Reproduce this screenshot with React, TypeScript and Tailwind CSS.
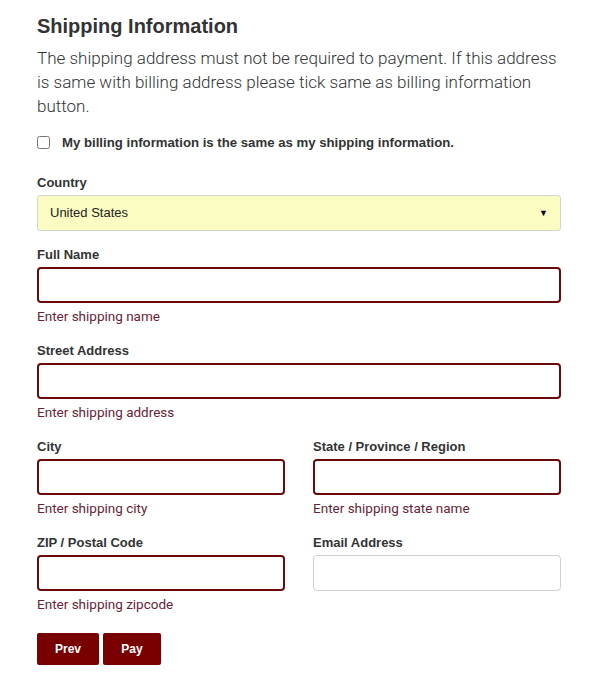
import React from 'react';

const label = "block text-[13px] font-semibold text-[#333] mb-[4px] font-['Liberation_Sans',Arial,sans-serif] leading-[16px]";
const errInput = "w-full h-[36px] rounded-[4px] border-2 border-[#6b0a0a] bg-white px-3 outline-none";
const okInput = "w-full h-[36px] rounded-[4px] border border-[#d0d0d0] bg-white px-3 outline-none";
const err = "mt-[5px] text-[13.5px] text-[#6a2336] leading-[16px] font-['Roboto',sans-serif]";

const Field: React.FC<{ name: string; error?: string }> = ({ name, error }) => (
  <div>
    <label className={label}>{name}</label>
    <input type="text" className={error ? errInput : okInput} />
    {error && <p className={err}>{error}</p>}
  </div>
);

const App: React.FC = () => {
  return (
    <div className="w-[598px] min-h-[690px] bg-white px-[37px] pt-[14px]">
      <h2 className="text-[20px] font-bold text-[#333] leading-[24px] font-['Liberation_Sans',Arial,sans-serif]">
        Shipping Information
      </h2>
      <p className="mt-[8px] text-[17px] leading-[24px] text-[#333] font-['Roboto',sans-serif] font-light">
        The shipping address must not be required to payment. If this address is same with billing address please tick same as billing information button.
      </p>

      <label className="mt-[15px] flex items-center gap-[12px]">
        <input type="checkbox" className="w-[13px] h-[13px] m-0" />
        <span className="text-[13.2px] font-bold text-[#333] font-['Liberation_Sans',Arial,sans-serif]">
          My billing information is the same as my shipping information.
        </span>
      </label>

      <div className="mt-[22px]">
        <label className={label}>Country</label>
        <div className="relative w-full h-[36px] rounded-[3px] border border-[#d4d4d4] bg-[#fbfcc1] flex items-center px-3">
          <span className="text-[13px] text-[#222] font-['Liberation_Sans',Arial,sans-serif]">United States</span>
          <span className="ml-auto text-[9px] text-black">▼</span>
        </div>
      </div>

      <div className="mt-[16px] flex flex-col gap-[19px]">
        <Field name="Full Name" error="Enter shipping name" />
        <Field name="Street Address" error="Enter shipping address" />
        <div className="grid grid-cols-2 gap-x-[28px] gap-y-[19px]">
          <Field name="City" error="Enter shipping city" />
          <Field name="State / Province / Region" error="Enter shipping state name" />
          <Field name="ZIP / Postal Code" error="Enter shipping zipcode" />
          <Field name="Email Address" />
        </div>
      </div>

      <div className="mt-[21px] flex gap-[4px]">
        <button className="w-[62px] h-[32px] rounded-[2px] bg-[#780000] text-white text-[12px] font-bold font-['Liberation_Sans',Arial,sans-serif]">
          Prev
        </button>
        <button className="w-[58px] h-[32px] rounded-[2px] bg-[#780000] text-white text-[12px] font-bold font-['Liberation_Sans',Arial,sans-serif]">
          Pay
        </button>
      </div>
    </div>
  );
};

export default App;
